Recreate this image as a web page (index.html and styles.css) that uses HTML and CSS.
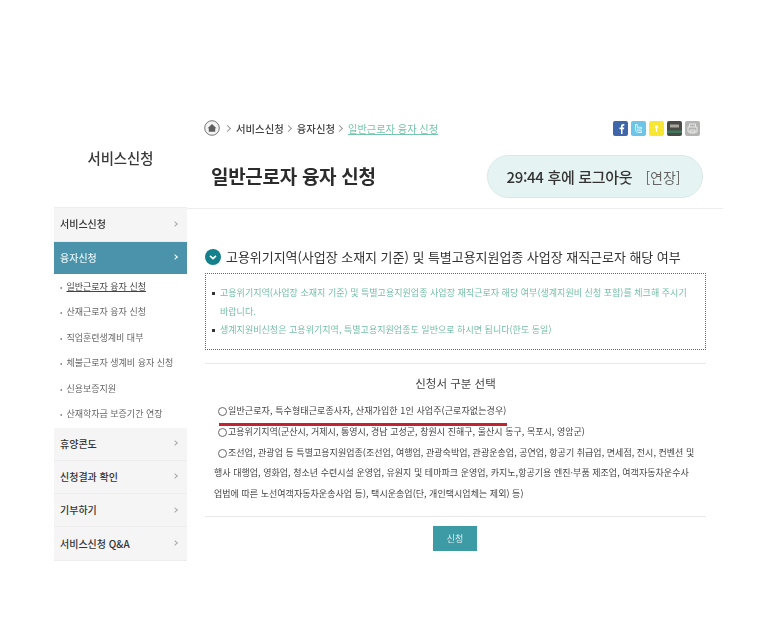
FILE: index.html
```html
<!DOCTYPE html>
<html lang="ko">
<head>
<meta charset="utf-8">
<title>일반근로자 융자 신청</title>
<link rel="stylesheet" href="styles.css">
</head>
<body>
<div class="page">
  <aside class="sidebar">
    <h2 class="side-title">서비스신청</h2>
    <nav class="menu">
      <a class="menu-item first"><span>서비스신청</span><i class="chev"></i></a>
      <a class="menu-item active"><span>융자신청</span><i class="chev"></i></a>
      <ul class="submenu">
        <li class="current"><span>일반근로자 융자 신청</span></li>
        <li><span>산재근로자 융자 신청</span></li>
        <li><span>직업훈련생계비 대부</span></li>
        <li><span>체불근로자 생계비 융자 신청</span></li>
        <li><span>신용보증지원</span></li>
        <li><span>산재학자금 보증기간 연장</span></li>
      </ul>
      <a class="menu-item"><span>휴양콘도</span><i class="chev"></i></a>
      <a class="menu-item"><span>신청결과 확인</span><i class="chev"></i></a>
      <a class="menu-item"><span>기부하기</span><i class="chev"></i></a>
      <a class="menu-item"><span>서비스신청 Q&amp;A</span><i class="chev"></i></a>
    </nav>
  </aside>
  <main class="main">
    <header class="head">
      <div class="crumb-row">
        <div class="crumbs">
          <svg class="home" width="16" height="16" viewBox="0 0 16 16"><circle cx="8" cy="8" r="7.3" fill="#f4f4f4" stroke="#777" stroke-width="1"/><path d="M3.6 8.2 8 4l4.400 4.200H11.200v3.500H4.800V8.200z" fill="#5f5f5f"/></svg>
          <i class="sep"></i><span>서비스신청</span>
          <i class="sep"></i><span>융자신청</span>
          <i class="sep"></i><span class="here">일반근로자 융자 신청</span>
        </div>
        <div class="socials">
          <svg class="soc" viewBox="0 0 15 15"><rect width="15" height="15" rx="2" fill="#3f66a8"/><path d="M8 13V8.200H6.500V6.400H8V5.200C8 3.700 8.900 3 10.200 3h1.100v1.800h-.8c-.6 0-.8.3-.8.8v.8h1.500l-.2 1.800H9.500V13z" fill="#fff"/></svg>
          <svg class="soc" viewBox="0 0 15 15"><rect width="15" height="15" rx="2" fill="#6cc5e8"/><path d="M4.500 3.500v5c0 2 1.200 3 3 3h3V9.800h-3c-.7 0-1.200-.4-1.200-1.200V8h4.200V6.300H6.300V3.500z" fill="none" stroke="#d8f1fa" stroke-width="1"/></svg>
          <svg class="soc" viewBox="0 0 15 15"><rect width="15" height="15" rx="2" fill="#f7e733"/><circle cx="7.500" cy="6" r="1.800" fill="#fff"/><rect x="6.900" y="7.500" width="1.200" height="3.500" fill="#fff"/></svg>
          <svg class="soc" viewBox="0 0 15 15"><rect width="15" height="15" rx="2" fill="#4a4a48"/><rect x="3" y="3.500" width="9" height="3" fill="#a8a8a0"/><rect y="9.500" width="15" height="2.500" fill="#3f7a58"/></svg>
          <svg class="soc" viewBox="0 0 15 15"><rect width="15" height="15" rx="2" fill="#b4b4b2"/><path d="M4.500 6V3h6v3M3 6h9v5H3zM5 9h5v3H5z" fill="none" stroke="#e8e8e6" stroke-width="1"/></svg>
        </div>
      </div>
      <div class="title-row">
        <h1 class="title">일반근로자 융자 신청</h1>
        <div class="timer"><b>29:44 후에 로그아웃</b><span class="extend">[연장]</span></div>
      </div>
    </header>
    <section class="content">
      <h3 class="section-title">
        <svg width="16" height="16" viewBox="0 0 16 16"><circle cx="8" cy="8" r="8" fill="#13808c"/><path d="M5 6.800 8 9.600l3-2.800" fill="none" stroke="#fff" stroke-width="1.600"/></svg>
        <span>고용위기지역(사업장 소재지 기준) 및 특별고용지원업종 사업장 재직근로자 해당 여부</span>
      </h3>
      <ul class="notice">
        <li>고용위기지역(사업장 소재지 기준) 및 특별고용지원업종 사업장 재직근로자 해당 여부(생계지원비 신청 포함)를 체크해 주시기<br>바랍니다.</li>
        <li>생계지원비신청은 고용위기지역, 특별고용지원업종도 일반으로 하시면 됩니다(한도 동일)</li>
      </ul>
      <div class="select-box">
        <h4 class="select-title">신청서 구분 선택</h4>
        <p class="opt marked"><i class="radio"></i>일반근로자, 특수형태근로종사자, 산재가입한 1인 사업주(근로자없는경우)<i class="redline"></i></p>
        <p class="opt"><i class="radio"></i>고용위기지역(군산시, 거제시, 통영시, 경남 고성군, 창원시 진해구, 울산시 동구, 목포시, 영암군)</p>
        <p class="opt long"><i class="radio"></i>조선업, 관광업 등 특별고용지원업종(조선업, 여행업, 관광숙박업, 관광운송업, 공연업, 항공기 취급업, 면세점, 전시, 컨벤션 및<br>행사 대행업, 영화업, 청소년 수련시설 운영업, 유원지 및 테마파크 운영업, 카지노,항공기용 엔진·부품 제조업, 여객자동차운수사<br>업법에 따른 노선여객자동차운송사업 등), 택시운송업(단, 개인택시업체는 제외) 등)</p>
      </div>
      <div class="actions"><button class="submit" type="button">신청</button></div>
    </section>
  </main>
</div>
</body>
</html>
```
FILE: styles.css
```css
* { box-sizing: border-box; }
html, body { margin: 0; padding: 0; background: #fff; }
body {
  font-family: "Noto Sans CJK KR", "Noto Sans", sans-serif;
  color: #333;
  height: 620px;
  overflow: hidden;
}
.page {
  display: flex;
  padding: 113px 0 0 54px;
  filter: blur(0.45px);
}
.sidebar { width: 133px; flex: none; }
.side-title {
  margin: 0;
  height: 95px;
  padding-top: 34px;
  text-align: center;
  font-size: 14.4px;
  line-height: 22px;
  font-weight: 500;
  color: #3a3a3a;
  border-bottom: 1px solid #eee;
}
.menu { display: flex; flex-direction: column; }
.menu-item {
  display: flex;
  justify-content: space-between;
  align-items: center;
  height: 33.3px;
  padding: 0 10px 1px 6px;
  background: #f5f5f5;
  border-bottom: 1px solid #ededed;
  font-size: 10px;
  font-weight: 500;
  color: #333;
}
.menu-item.first { height: 33.5px; }
.menu-item.active { height: 32px; background: #4a93ab; color: #e4f3f5; border-bottom: 0; }
.chev {
  width: 4px;
  height: 4px;
  border-top: 1px solid #aaa;
  border-right: 1px solid #aaa;
  transform: rotate(45deg);
}
.active .chev { border-color: #fff; border-width: 1.5px 1.5px 0 0; }
.submenu {
  list-style: none;
  margin: 0;
  padding: 0 0 1px 6px;
  height: 154px;
  font-size: 9px;
  color: #666;
}
.submenu li { height: 25.5px; line-height: 25.5px; overflow: hidden; }
.submenu li::before { content: "•"; margin-right: 4px; font-size: 7px; line-height: 1; color: #888; }
.current span { text-decoration: underline; color: #444; }
.main { width: 536px; flex: none; }
.head {
  height: 96px;
  border-bottom: 1px solid #eee;
  padding: 0 20px 0 17px;
  display: flex;
  flex-direction: column;
}
.crumb-row { display: flex; justify-content: space-between; align-items: center; padding-top: 6px; height: 22px; margin-top: 1px; }
.crumbs { display: flex; align-items: center; font-size: 10.4px; font-weight: 500; color: #444; }
.home { margin-right: 3px; }
.sep {
  width: 5px; height: 5px; margin: 0 6px 0 2px;
  border-top: 1px solid #999; border-right: 1px solid #999;
  transform: rotate(45deg);
}
.here { color: #76c6ac; text-decoration: underline; font-weight: 400; font-size: 10.2px; }
.socials { display: flex; gap: 3px; margin-right: 3px; }
.soc { width: 15px; height: 15px; }
.title-row { display: flex; justify-content: space-between; align-items: center; margin-top: 19px; padding-left: 7px; }
.title { margin: -2px 0 0; font-size: 19px; line-height: 28px; font-weight: 700; color: #2c2c2c; letter-spacing: -0.3px; }
.timer {
  width: 216px;
  height: 43px;
  border-radius: 22px;
  background: #e6f3f3;
  border: 1px solid #d8e8e8;
  display: flex;
  align-items: center;
  justify-content: center;
  gap: 13px;
  padding-right: 3px;
  font-size: 14px;
}
.timer b { font-size: 15px; font-weight: 500; color: #333; letter-spacing: -0.3px; }
.extend { color: #666; }
.content { padding: 38px 17px 0 18px; }
.section-title {
  margin: 0 0 7px;
  display: flex;
  align-items: center;
  gap: 5px;
  font-size: 13px;
  line-height: 19px;
  font-weight: 400;
  color: #333;
  white-space: nowrap;
  letter-spacing: -0.04px;
}
.notice {
  margin: 0;
  padding: 10px 14px 9px 14px;
  height: 77px;
  list-style: none;
  border: 1px dotted #666;
  font-size: 9px;
  line-height: 18.5px;
  color: #74bfa6;
  letter-spacing: 0.03px;
}
.notice li { position: relative; }
.notice li::before {
  content: "";
  position: absolute;
  left: -8px;
  top: 8px;
  width: 3px;
  height: 3px;
  background: #333;
}
.select-box {
  margin-top: 13px;
  border-top: 1px solid #e8e8e8;
  border-bottom: 1px solid #e8e8e8;
  padding: 9px 0 0;
  height: 154px;
}
.select-title { margin: 0 0 8px; text-align: center; font-size: 11.5px; line-height: 20px; font-weight: 400; color: #444; }
.opt {
  margin: 0;
  padding-left: 13px;
  font-size: 9px;
  line-height: 20.75px;
  color: #444;
  position: relative;
  letter-spacing: 0.03px;
  white-space: nowrap;
}
.opt.marked { letter-spacing: 0.1px; }
.opt.long { padding-left: 9px; text-indent: 4px; }
.radio {
  display: inline-block;
  width: 9px;
  height: 9px;
  margin-right: 1px;
  border: 1px solid #666;
  border-radius: 50%;
  vertical-align: -2px;
}
.redline {
  position: absolute;
  left: 14px;
  top: 22px;
  width: 288px;
  height: 3px;
  background: #c3232c;
}
.actions { display: flex; justify-content: center; padding: 9px 1px 0 0; }
.submit {
  width: 44px;
  height: 25px;
  padding: 0;
  border: 0;
  background: #3d9ba6;
  color: #d8eef0;
  font: 9px "Noto Sans CJK KR", sans-serif;
}
```
